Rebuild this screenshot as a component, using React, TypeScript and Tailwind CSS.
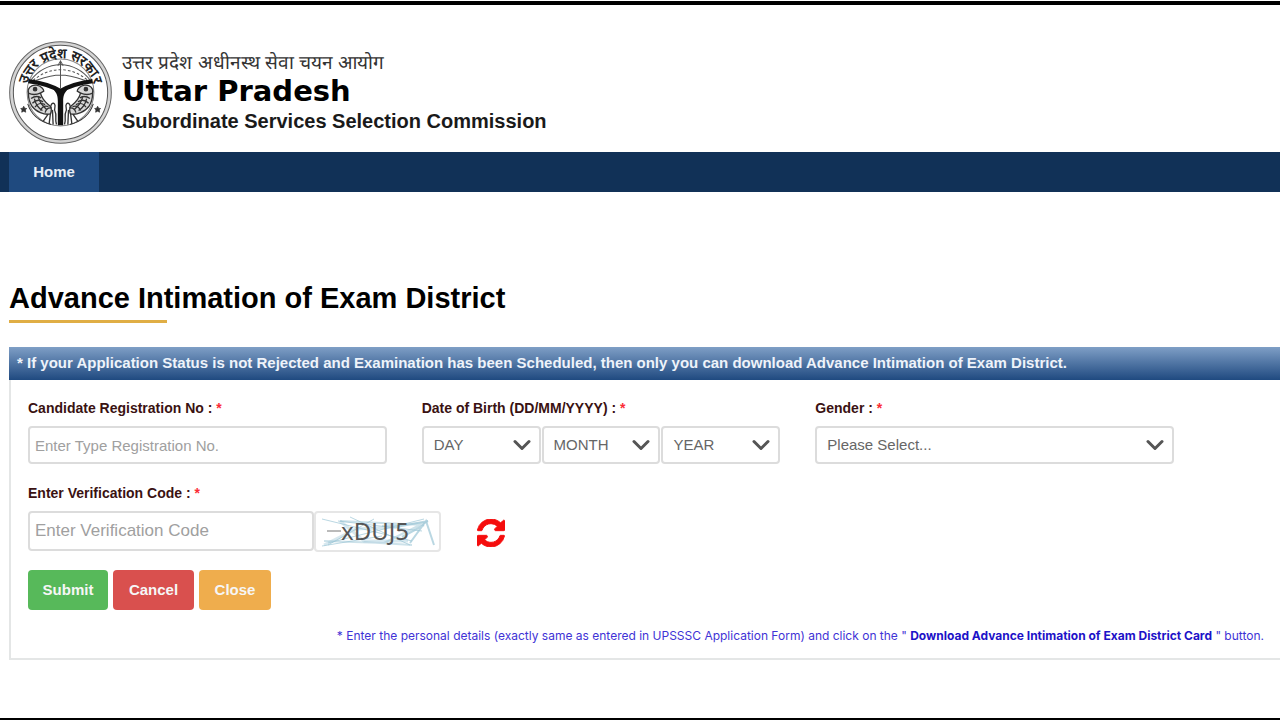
import React, { useState } from 'react';

interface FieldLabelProps {
  htmlFor: string;
  text: string;
}

interface SelectBoxProps {
  id: string;
  label?: string;
  placeholder: string;
  options: string[];
}

const DAYS = Array.from({ length: 31 }, (_, i) => String(i + 1).padStart(2, '0'));
const MONTHS = Array.from({ length: 12 }, (_, i) => String(i + 1).padStart(2, '0'));
const YEARS = Array.from({ length: 50 }, (_, i) => String(2006 - i));

const FieldLabel: React.FC<FieldLabelProps> = ({ htmlFor, text }) => (
  <label htmlFor={htmlFor} className="block h-5 text-sm leading-5 font-bold text-[#3a1212]">
    {text} : <span className="text-red-500">*</span>
  </label>
);

const SelectBox: React.FC<SelectBoxProps> = ({ id, label, placeholder, options }) => (
  <div className="relative min-w-0 flex-1">
    <select
      id={id}
      aria-label={label}
      className="h-[38px] w-full appearance-none rounded border-2 border-[#dcdcdc] bg-white pr-8 pl-[10px] text-[15px] text-[#666]"
    >
      <option value="">{placeholder}</option>
      {options.map((option) => (
        <option key={option} value={option}>{option}</option>
      ))}
    </select>
    <svg
      viewBox="0 0 18 12"
      className="pointer-events-none absolute top-[13px] right-[10px] h-3 w-[18px]"
      fill="none"
      stroke="#555"
      strokeWidth="3"
      strokeLinecap="round"
      strokeLinejoin="round"
    >
      <path d="M2 2.500l7 7 7-7" />
    </svg>
  </div>
);

const Fish = () => (
  <g fill="none" stroke="#333" strokeWidth="4">
    <path fill="#d8d8d8" d="M84 190c-4-14 8-26 24-24 14 2 22 12 22 18l-10 6c6 22 18 30 28 38 6 6 6 14 2 24-18 4-44-6-56-24-6-10-10-26-10-38z" />
    <path d="M84 190c12 6 26 4 36 0M92 206c8-6 20-8 30-2M96 220c8-8 20-12 32-4M104 232c6-10 18-14 30-8M120 242c4-10 12-16 24-12M134 248c2-8 8-14 16-14" />
    <path d="M102 206c2 12 12 28 24 36M114 202c2 12 12 26 26 38" />
    <circle cx="104" cy="178" r="5" fill="#333" />
    <path d="M142 254l-14 20M150 250l-4 32M156 240l2 44M152 236c-4-10 4-20 10-14 6 8-4 16 2 24 6 10-2 22 4 38" />
    <path d="M82 222c10 32 34 52 70 62" strokeWidth="3" />
  </g>
);

const StateEmblem = () => (
  <svg viewBox="26 34 308 308" className="h-[103px] w-[103px] shrink-0" role="img" aria-label="उत्तर प्रदेश सरकार">
    <defs>
      <path id="emblem-arc" d="M79 202A102 102 0 1 1 281 202" />
    </defs>
    <circle cx="180" cy="188" r="147" fill="#fff" stroke="#d4d4d4" strokeWidth="10" />
    <circle cx="180" cy="188" r="152" fill="none" stroke="#666" strokeWidth="3" />
    <circle cx="180" cy="188" r="141" fill="none" stroke="#555" strokeWidth="3" />
    <circle cx="180" cy="188" r="100" fill="#fff" stroke="#888" strokeWidth="3" />
    <text className="font-bold" fontSize="41" fill="#222" textAnchor="middle">
      <textPath href="#emblem-arc" startOffset="50%">उत्तर प्रदेश सरकार</textPath>
    </text>
    <path d="M70 229l3 6 6 1-4 4 1 7-6-3-6 3 1-7-4-4 6-1zM291 229l3 6 6 1-4 4 1 7-6-3-6 3 1-7-4-4 6-1z" fill="#333" stroke="#333" strokeWidth="2" />
    <g fill="none" stroke="#555" strokeWidth="3">
      <path d="M92 150C112 124 142 106 180 104c38 2 68 20 88 46" />
      <path d="M98 152C122 132 148 120 180 120c32 0 58 12 82 32" strokeDasharray="8 6" />
      <path d="M180 92v84M172 108l8-14 8 14M106 152c24-8 46-16 74-16s50 8 74 16" />
    </g>
    <path
      d="M84 154c30 4 64 10 96 30 32-20 66-26 96-30"
      fill="none"
      stroke="#111"
      strokeWidth="13"
    />
    <path d="M158 178h44c-12 12-14 22-14 36v72h-16v-72c0-14-2-24-14-36z" fill="#111" />
    <Fish />
    <g transform="matrix(-1 0 0 1 360 0)">
      <Fish />
    </g>
  </svg>
);

const RefreshIcon = () => (
  <svg viewBox="0 128 1536 1536" className="h-7 w-7" fill="#f50d0d" stroke="#f50d0d" strokeWidth="50">
    <path d="M1511 1056q0 5-1 7-64 268-268 434.500t-478 166.500q-146 0-282.500-55t-243.500-157l-129 129q-19 19-45 19t-45-19-19-45v-448q0-26 19-45t45-19h448q26 0 45 19t19 45-19 45l-137 137q71 66 161 102t187 36q134 0 250-65t186-179q11-17 53-117 8-23 30-23h192q13 0 22.500 9.500t9.500 22.500zm25-800v448q0 26-19 45t-45 19h-448q-26 0-45-19t-19-45 19-45l138-138q-148-137-349-137-134 0-250 65t-186 179q-11 17-53 117-8 23-30 23h-199q-13 0-22.500-9.500t-9.500-22.500v-7q65-268 270-434.500t480-166.500q146 0 284 55.500t245 156.500l130-129q19-19 45-19t45 19 19 45z" />
  </svg>
);

const Captcha = () => (
  <svg viewBox="0 0 123 37" className="h-[37px] w-[123px]" role="img" aria-label="Verification code">
    <g fill="none" stroke="#9cc6d6">
      <path d="M6 6l90 22M12 30l96-24M22 8l84 10M6 33l60-10M34 4l60 28M58 6L12 32" opacity=".7" />
      <path d="M24 8l84 4M8 28l60 2 44-22M66 13l42-3M48 29l48 3" strokeWidth="2" opacity=".5" />
      <path d="M94 30l16-22 8 24M80 14l32-6M86 24l22-12" strokeWidth="2" opacity=".7" />
      <path d="M8 32l32-16 40-2M24 8l24 20h44" strokeWidth="3" opacity=".4" />
    </g>
    <path d="M11 18h14" stroke="#777" />
    <text x="25" y="27" fontSize="24" fill="#555" className="font-['Noto_Sans',sans-serif]">xDUJ5</text>
  </svg>
);

export default function App() {
  const [registrationNo, setRegistrationNo] = useState('');
  const [verificationCode, setVerificationCode] = useState('');

  return (
    <div className="flex min-h-screen flex-col overflow-x-hidden border-b-2 border-black bg-white pt-px font-['Liberation_Sans',Arial,sans-serif] text-black">
      <div className="h-1 bg-black" />

      {/* Header */}
      <header className="flex items-center gap-[10px] px-[9px] pt-9 pb-2">
        <StateEmblem />
        <div>
          <p className="text-[19px] leading-7 text-[#333]">उत्तर प्रदेश अधीनस्थ सेवा चयन आयोग</p>
          <p className="font-['DejaVu_Sans',Verdana,sans-serif] text-[29px] leading-7 font-bold">Uttar Pradesh</p>
          <p className="text-xl leading-8 font-bold text-[#1a1a1a]">Subordinate Services Selection Commission</p>
        </div>
      </header>

      {/* Navigation */}
      <nav className="flex h-10 bg-[#113157] px-[9px]">
        <a href="#home" className="flex w-[90px] items-center justify-center bg-[#1f4a7f] text-[15px] font-bold text-[#e8eef5]">
          Home
        </a>
      </nav>

      <main className="pt-[88px] pb-14 pl-[9px]">
        <h1 className="text-[29px] leading-9 font-bold">Advance Intimation of Exam District</h1>
        <div className="mt-1 h-[3px] w-[158px] bg-[#e0ae45]" />

        {/* Exam district form */}
        <section className="mt-6 border-b-2 border-l-2 border-[#e4e6e6]">
          <h2 className="-ml-[2px] h-[33px] bg-linear-to-b from-[#7f9fc6] to-[#1f4a80] pl-2 text-[15px] leading-[31px] font-bold text-[#eef3fa]">
            * If your Application Status is not Rejected and Examination has been Scheduled, then only you can download Advance Intimation of Exam District.
          </h2>

          <form className="pt-[18px] pb-3 pl-[17px]" onSubmit={(e) => e.preventDefault()}>
            <div className="grid grid-cols-3 gap-x-[35px] gap-y-[19px] pr-[106px]">
              <div className="space-y-2">
                <FieldLabel htmlFor="registrationNo" text="Candidate Registration No" />
                <input
                  id="registrationNo"
                  type="text"
                  value={registrationNo}
                  onChange={(e) => setRegistrationNo(e.target.value)}
                  placeholder="Enter Type Registration No."
                  className="h-[38px] w-full rounded border-2 border-[#dcdcdc] px-[5px] text-[15px] placeholder:text-[#a0a0a0]"
                />
              </div>

              <div className="space-y-2">
                <FieldLabel htmlFor="day" text="Date of Birth (DD/MM/YYYY)" />
                <div className="flex gap-px">
                  <SelectBox id="day" placeholder="DAY" options={DAYS} />
                  <SelectBox id="month" label="Month" placeholder="MONTH" options={MONTHS} />
                  <SelectBox id="year" label="Year" placeholder="YEAR" options={YEARS} />
                </div>
              </div>

              <div className="space-y-2">
                <FieldLabel htmlFor="gender" text="Gender" />
                <div className="flex">
                  <SelectBox id="gender" placeholder="Please Select..." options={['Male', 'Female', 'Transgender']} />
                </div>
              </div>

              <div className="col-span-2 space-y-2">
                <FieldLabel htmlFor="verificationCode" text="Enter Verification Code" />
                <div className="flex items-start">
                  <input
                    id="verificationCode"
                    type="text"
                    value={verificationCode}
                    onChange={(e) => setVerificationCode(e.target.value)}
                    placeholder="Enter Verification Code"
                    className="h-10 w-[286px] rounded border-2 border-[#dcdcdc] px-[5px] text-[17px] placeholder:text-[#a0a0a0]"
                  />
                  <div className="h-[41px] w-[127px] rounded border-2 border-[#e6e6e6]">
                    <Captcha />
                  </div>
                  <button type="button" aria-label="Refresh code" className="mt-2 ml-9">
                    <RefreshIcon />
                  </button>
                </div>
              </div>
            </div>

            <div className="mt-[18px] flex gap-[5px] text-[15px] font-bold text-[#f6f6f6]">
              <button type="submit" className="h-10 w-20 rounded bg-[#57b95a]">Submit</button>
              <button type="button" className="h-10 w-[81px] rounded bg-[#d9504e]">Cancel</button>
              <button type="button" className="h-10 w-[72px] rounded bg-[#efad4d]">Close</button>
            </div>

            <p className="mt-4 pr-4 text-right font-['Inter',Arial,sans-serif] text-xs leading-5 text-[#3f33d6]">
              * Enter the personal details (exactly same as entered in UPSSSC Application Form) and click on the "{' '}
              <strong className="text-[#1d12c8]">Download Advance Intimation of Exam District Card</strong> " button.
            </p>
          </form>
        </section>
      </main>
    </div>
  );
}
